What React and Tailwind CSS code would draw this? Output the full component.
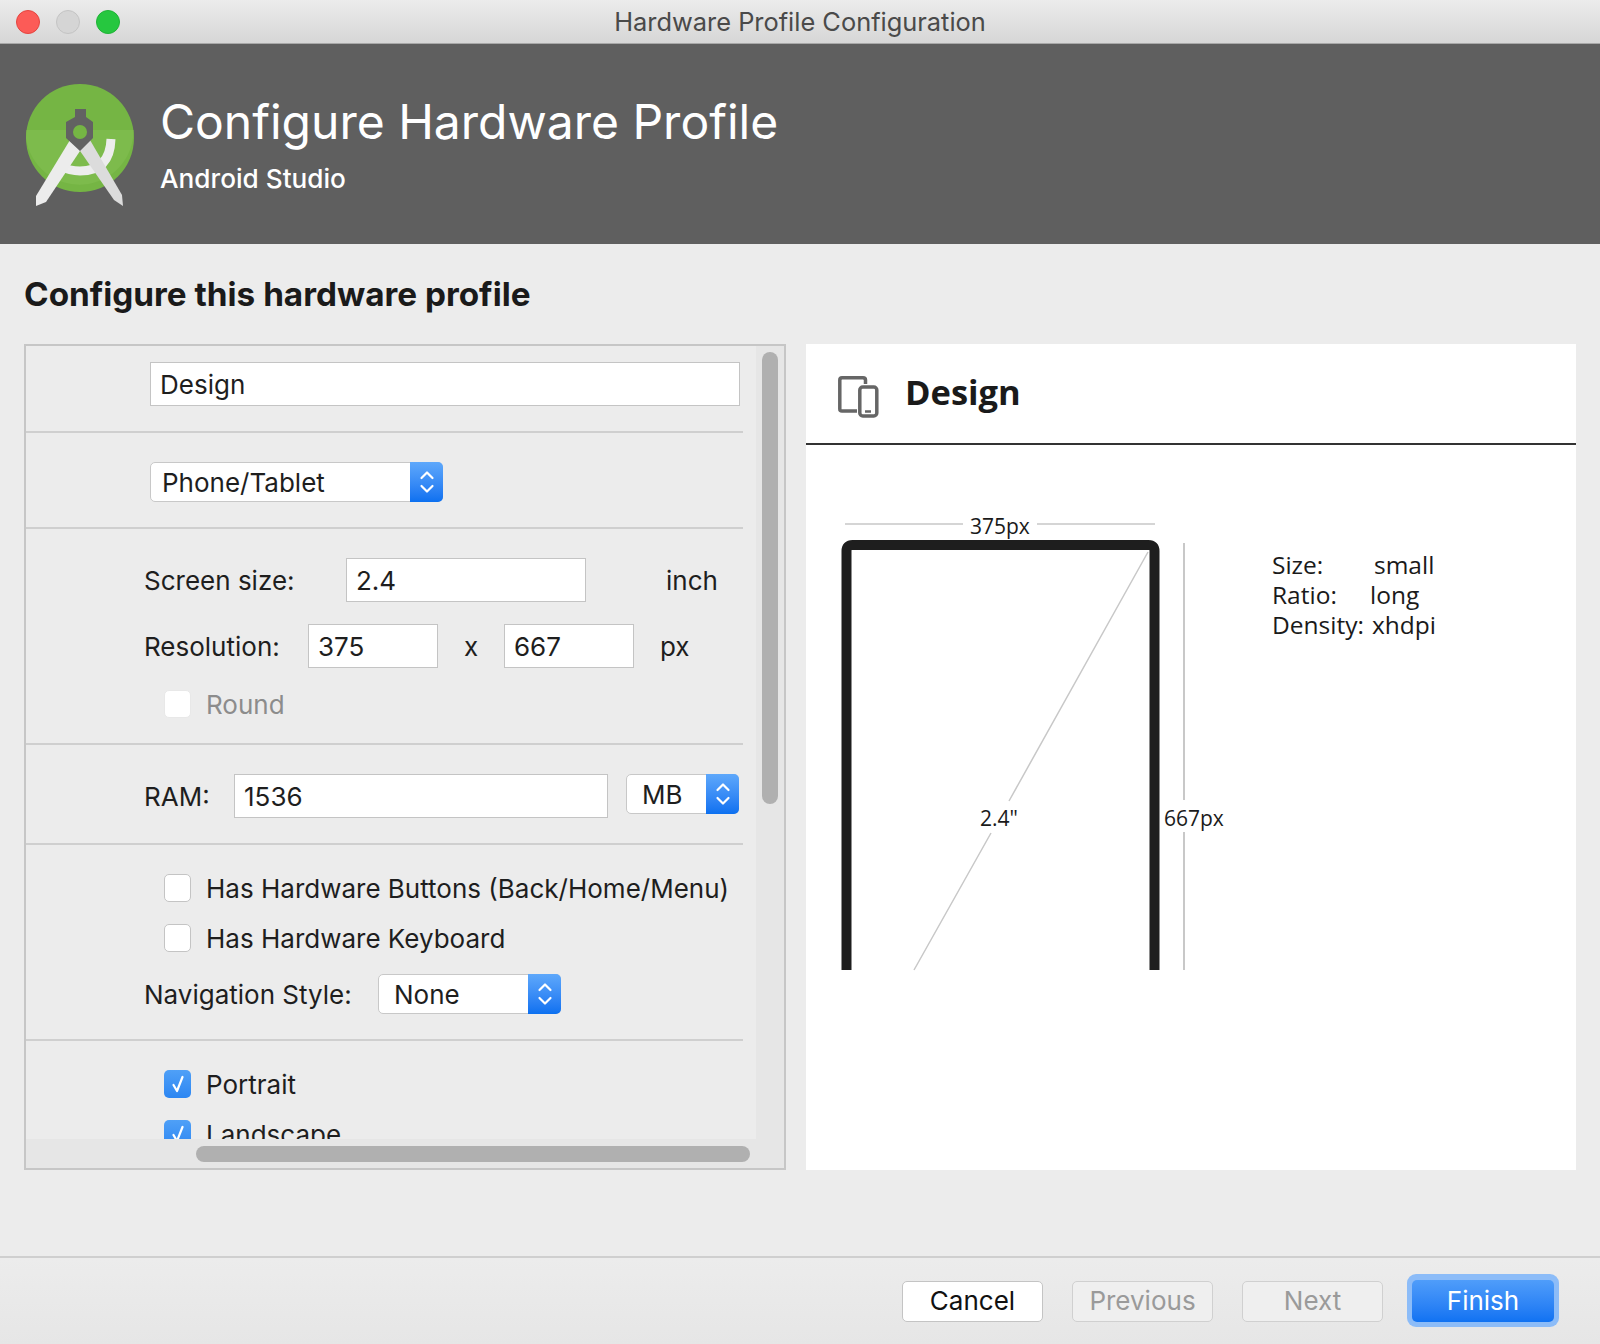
import React from "react";

const ui = "font-['Inter','Liberation_Sans',sans-serif]";

const TextBox = ({ value, className }) => (
  <div className={`h-[44px] bg-white border border-[#c4c4c4] pl-[9px] flex items-center text-[26px] text-[#1e1e1e] ${className}`}>
    {value}
  </div>
);

const Select = ({ value, className, pad }) => (
  <div className={`h-[40px] bg-white border border-[#c8c8c8] rounded-[5px] flex items-center justify-between text-[26px] text-[#1e1e1e] ${className}`}>
    <span className={pad}>{value}</span>
    <div className="w-[33px] h-[40px] -mr-px rounded-r-[5px] bg-gradient-to-b from-[#5ea8fb] to-[#0b70f0] flex items-center justify-center">
      <svg width="16" height="26" viewBox="0 0 16 26" fill="none" stroke="#fff" strokeWidth="2.2" strokeLinecap="round" strokeLinejoin="round">
        <path d="M2.5 9 L8 3.5 L13.5 9" />
        <path d="M2.5 17 L8 22.5 L13.5 17" />
      </svg>
    </div>
  </div>
);

const Check = ({ label, checked, disabled }) => (
  <div className="flex items-center ml-[138px] h-[28px] text-[26px]">
    {checked ? (
      <div className="w-[27px] h-[28px] rounded-[5px] bg-gradient-to-b from-[#4fa0f7] to-[#2c86f2] flex items-center justify-center shrink-0">
        <svg width="16" height="20" viewBox="0 0 16 20" fill="none" stroke="#fff" strokeWidth="2.2" strokeLinecap="round" strokeLinejoin="round">
          <path d="M3.5 11 L7 17 L12.5 3" />
        </svg>
      </div>
    ) : (
      <div className={`w-[27px] h-[28px] rounded-[5px] bg-white shrink-0 border ${disabled ? "border-[#e8e8e8]" : "border-[#c4c4c4]"}`} />
    )}
    <span className={`ml-[15px] whitespace-nowrap ${disabled ? "text-[#8c8c8c]" : "text-[#1e1e1e]"}`}>{label}</span>
  </div>
);

const Button = ({ label, disabled }) => (
  <div className={`w-[141px] h-[41px] pb-[2px] rounded-[5px] border flex items-center justify-center text-[26px] ${disabled ? "bg-[#efefef] border-[#d0d0d0] text-[#9a9a9a]" : "bg-white border-[#c4c4c4] text-[#111]"}`}>
    {label}
  </div>
);

const Logo = () => (
  <svg width="112" height="126" viewBox="0 0 112 126" className="shrink-0">
    <circle cx="54" cy="54" r="54" fill="#75b544" />
    <path d="M0.5 46 H107.5 A54 54 0 0 1 0 54 Z" fill="#7dbb4c" />
    <path d="M85 55 Q84 87 54 87 Q44 87 33 82" fill="none" stroke="#ededed" strokeWidth="9" />
    <path d="M44 56 L56 64 L20 118 L10 122 L10 112 Z" fill="#ececec" />
    <path d="M64 56 L52 64 L88 116 L97 122 L96 111 Z" fill="#dcdcdc" />
    <path d="M49 25 H60 V33 L67 38 V54 L54 67 L40 54 V38 L49 33 Z" fill="#626262" />
    <circle cx="54" cy="48" r="7" fill="#75b544" />
  </svg>
);

const DeviceIcon = () => (
  <svg width="42" height="42" viewBox="0 0 42 42" fill="none" stroke="#666" strokeWidth="3.5" className="mt-[9px]">
    <path d="M19 35 H4 Q1.8 35 1.8 33 V4 Q1.8 1.8 4 1.8 H25 Q27.5 1.8 27.5 4 V8" />
    <rect x="21.8" y="11" width="17" height="29" rx="3" />
    <path d="M27 35.5 H33" strokeWidth="2.5" />
  </svg>
);

export default function App() {
  return (
    <div className={`${ui} w-[1600px] h-[1344px] bg-[#ececec] flex flex-col overflow-hidden`}>
      {/* Title bar */}
      <div className="relative h-[44px] shrink-0 pt-[2px] bg-gradient-to-b from-[#ececec] to-[#d6d6d6] border-b border-[#a8a8a8] flex items-center justify-center">
        <div className="absolute left-[16px] top-[10px] flex gap-[16px]">
          <div className="w-[24px] h-[24px] rounded-full bg-[#fc5b57] border border-[#e5443f]" />
          <div className="w-[24px] h-[24px] rounded-full bg-[#d5d5d5] border border-[#c4c4c4]" />
          <div className="w-[24px] h-[24px] rounded-full bg-[#26c73f] border border-[#1fb336]" />
        </div>
        <span className="text-[25.4px] text-[#4a4a4a]">Hardware Profile Configuration</span>
      </div>

      {/* Header */}
      <div className="h-[200px] shrink-0 bg-[#5f5f5f] flex items-start pl-[26px] pt-[40px] text-white">
        <Logo />
        <div className="ml-[22px]">
          <div className="text-[48px] leading-[56px] mt-[10px]">Configure Hardware Profile</div>
          <div className="text-[26.2px] font-medium leading-[32px] mt-[13px]">Android Studio</div>
        </div>
      </div>

      <div className="h-[100px] shrink-0 flex items-center pl-[24px] pt-[1px] text-[33.3px] font-bold text-[#1a1a1a]">
        Configure this hardware profile
      </div>

      {/* Body */}
      <div className="flex gap-[20px] pl-[24px] h-[826px] shrink-0">
        {/* Form panel */}
        <div className="w-[762px] border-2 border-[#c6c6c6] grid grid-cols-[1fr_28px] grid-rows-[1fr_29px] overflow-hidden">
          <div className="overflow-hidden">
            <div className="w-[717px] h-[87px] border-b-2 border-[#cfcfcf] pt-[16px] pl-[124px]">
              <TextBox value="Design" className="w-[590px]" />
            </div>
            <div className="w-[717px] h-[96px] border-b-2 border-[#cfcfcf] pt-[29px] pl-[124px]">
              <Select value="Phone/Tablet" className="w-[293px]" pad="pl-[11px]" />
            </div>
            <div className="w-[717px] h-[216px] border-b-2 border-[#cfcfcf] pt-[29px] text-[26px] text-[#1e1e1e]">
              <div className="flex items-center pl-[118px]">
                <span className="w-[202px]">Screen size:</span>
                <TextBox value="2.4" className="w-[240px]" />
                <span className="ml-[80px]">inch</span>
              </div>
              <div className="flex items-center pl-[118px] mt-[22px]">
                <span className="w-[164px]">Resolution:</span>
                <TextBox value="375" className="w-[130px]" />
                <span className="ml-[26px] w-[40px]">x</span>
                <TextBox value="667" className="w-[130px]" />
                <span className="ml-[26px]">px</span>
              </div>
              <div className="mt-[22px]">
                <Check label="Round" disabled />
              </div>
            </div>
            <div className="w-[717px] h-[100px] border-b-2 border-[#cfcfcf] pt-[29px] pl-[118px] flex items-start text-[26px] text-[#1e1e1e]">
              <span className="w-[90px] h-[44px] flex items-center">RAM:</span>
              <TextBox value="1536" className="w-[374px]" />
              <Select value="MB" className="w-[113px] ml-[18px]" pad="pl-[15px]" />
            </div>
            <div className="w-[717px] h-[196px] border-b-2 border-[#cfcfcf] pt-[29px]">
              <Check label="Has Hardware Buttons (Back/Home/Menu)" />
              <div className="mt-[22px]">
                <Check label="Has Hardware Keyboard" />
              </div>
              <div className="flex items-center pl-[118px] mt-[22px] text-[26px] text-[#1e1e1e]">
                <span className="w-[234px]">Navigation Style:</span>
                <Select value="None" className="w-[183px]" pad="pl-[15px]" />
              </div>
            </div>
            <div className="pt-[29px]">
              <Check label="Portrait" checked />
              <div className="mt-[22px]">
                <Check label="Landscape" checked />
              </div>
            </div>
          </div>
          {/* Scrollbars */}
          <div className="row-span-2 bg-[#e6e6e6] pl-[6px] pt-[6px]">
            <div className="w-[16px] h-[452px] rounded-full bg-[#b0b0b0]" />
          </div>
          <div className="bg-[#e6e6e6] pl-[170px] pt-[7px]">
            <div className="w-[554px] h-[16px] rounded-full bg-[#b0b0b0]" />
          </div>
        </div>

        {/* Preview panel */}
        <div className="w-[770px] bg-white flex flex-col">
          <div className="h-[101px] shrink-0 border-b-2 border-[#333] flex items-center pl-[32px] pb-[3px]">
            <DeviceIcon />
            <span className="ml-[25px] text-[34.5px] font-bold text-[#1a1a1a] font-['Open_Sans',sans-serif]">Design</span>
          </div>
          <div className="relative flex-1 flex font-['Open_Sans',sans-serif] text-[24.5px] text-[#1a1a1a]">
            {/* device drawing */}
            <svg width="400" height="530" viewBox="0 0 400 530" fill="none" className="absolute left-0 top-0">
              <path d="M39 79 H157 M231 79 H349" stroke="#c8c8c8" strokeWidth="1.5" />
              <path d="M40.5 525 V106 Q40.5 100 46.5 100 H342.5 Q348.5 100 348.5 106 V525" stroke="#1e1e1e" strokeWidth="10" />
              <path d="M378 98 V355 M378 387 V525" stroke="#c8c8c8" strokeWidth="2" />
              <path d="M342 107 L203 356 M185 388 L108 525" stroke="#c8c8c8" strokeWidth="1.5" />
            </svg>
            <span className="absolute left-[164px] top-[67px] leading-[28px] text-[21px]">375px</span>
            <span className="absolute left-[174px] top-[359px] leading-[28px] text-[21px]">2.4"</span>
            <span className="absolute left-[358px] top-[359px] leading-[28px] text-[21px]">667px</span>
            <div className="ml-[466px] mt-[105px] grid grid-cols-[100px_auto] leading-[30px] self-start">
              <span>Size:</span>
              <span className="ml-[2px]">small</span>
              <span>Ratio:</span>
              <span className="-ml-[2px]">long</span>
              <span>Density:</span>
              <span>xhdpi</span>
            </div>
          </div>
        </div>
      </div>

      {/* Footer */}
      <div className="mt-[86px] flex-1 border-t-2 border-[#cfcfcf] bg-gradient-to-b from-[#ececec] to-[#e6e6e6] flex justify-end items-start pt-[23px] pr-[46px] gap-[29px]">
        <Button label="Cancel" />
        <Button label="Previous" disabled />
        <Button label="Next" disabled />
        <div className="-mt-[7px] ml-[-5px] mr-[-5px] pt-[6px] pb-[5px] px-[5px] rounded-[9px] bg-[#8cbcf8]">
          <div className="w-[142px] h-[42px] pb-[2px] rounded-[5px] bg-gradient-to-b from-[#4f9dfa] to-[#0f72f2] flex items-center justify-center text-[26px] text-white">
            Finish
          </div>
        </div>
      </div>
    </div>
  );
}
